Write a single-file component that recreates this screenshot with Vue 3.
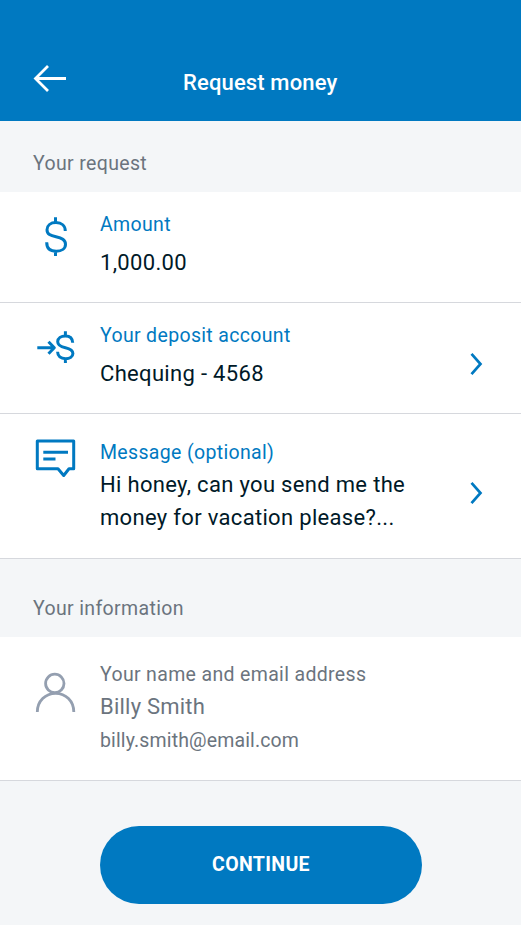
<script setup>
const message = 'Hi honey, can you send me the money for vacation please?...'
</script>

<template>
  <main class="screen">
    <header class="bar">
      <svg class="back" width="34" height="30" viewBox="0 0 34 30" role="img" aria-label="Back">
        <path d="M33 15.5H2.5M15 3L2.5 15.5L15 28" />
      </svg>
      <h1 class="title">Request money</h1>
    </header>

    <h2 class="section first">Your request</h2>

    <section class="row amount">
      <svg class="icon" width="60" height="60" viewBox="0 0 60 60">
        <path class="blue" d="M27.5 12.3v5M27.5 46v5M37.3 26C37.3 20.6 33.5 17.6 28 17.6S19 20.6 19 24.7C19 29.4 22.6 30.7 28 31.8C33.7 33 37.5 34.5 37.5 39.2C37.5 43.6 33.7 46.2 28.2 46.2C22.2 46.2 18.7 43.1 18.7 37.2" />
      </svg>
      <div class="text">
        <div class="label l-amount">Amount</div>
        <div class="value v-amount">1,000.00</div>
      </div>
    </section>

    <section class="row account">
      <svg class="icon" width="60" height="60" viewBox="0 0 60 60">
        <path class="blue" d="M9.3 27.8H26M20.5 21.8L26.3 27.8L20.5 33.8M37.4 11.3v5M37.4 38v5M44.7 22.8C44.5 18.4 41.6 16 37.4 16S29.7 18.3 29.7 21.8C29.7 25.6 33 26.8 37.4 27.7C42 28.7 44.9 30 44.9 33.5C44.9 36.8 41.8 38.7 37.6 38.7C32.7 38.7 29.6 36.2 29.6 31.8" />
      </svg>
      <div class="text">
        <div class="label l-account">Your deposit account</div>
        <div class="value v-account">Chequing - 4568</div>
      </div>
      <svg class="chevron" width="14" height="24" viewBox="0 0 14 24"><path d="M2.5 1.8L11.5 12L2.5 22.2" /></svg>
    </section>

    <section class="row message">
      <svg class="icon" width="60" height="60" viewBox="0 0 60 60">
        <path class="blue" d="M9.3 11H45.7V38.8H41L35.7 45.5L30 38.8H9.3Z M15.3 22.2H40M15.3 29H27.5" />
      </svg>
      <div class="text">
        <div class="label l-message">Message (optional)</div>
        <div class="value v-message">{{ message }}</div>
      </div>
      <svg class="chevron" width="14" height="24" viewBox="0 0 14 24"><path d="M2.5 1.8L11.5 12L2.5 22.2" /></svg>
    </section>

    <h2 class="section second">Your information</h2>

    <section class="row person">
      <svg class="icon" width="60" height="60" viewBox="0 0 60 60">
        <circle class="grey" cx="26.8" cy="23.4" r="9.2" />
        <path class="grey" d="M9.3 52C9.3 41 17.5 33.3 27.6 33.3S45.8 41 45.8 52" />
      </svg>
      <div class="text">
        <div class="label l-person">Your name and email address</div>
        <div class="value v-name">Billy Smith</div>
        <div class="email">billy.smith@email.com</div>
      </div>
    </section>

    <footer class="footer">
      <button class="continue" type="button"><span>CONTINUE</span></button>
    </footer>
  </main>
</template>

<style>
body {
  background: #fff;
}
</style>

<style scoped>
.screen {
  width: 521px;
  height: 925px;
  overflow: hidden;
  background: #f4f6f8;
  font-family: Roboto, sans-serif;
  color: #001928;
}
.bar {
  display: flex;
  align-items: flex-start;
  box-sizing: border-box;
  height: 121px;
  padding: 63px 0 0 33px;
  background: #0079c1;
}
.back path,
.chevron path,
.icon .blue,
.icon .grey {
  fill: none;
}
.back path {
  stroke: #fff;
  stroke-width: 2.8;
}
.title {
  margin: 5px 0 0 116px;
  font-size: 22px;
  line-height: 30px;
  font-weight: 500;
  letter-spacing: 0.14px;
  color: #fff;
  white-space: nowrap;
}
.section {
  box-sizing: border-box;
  margin: 0;
  padding-left: 33px;
  font-size: 19.5px;
  line-height: 26px;
  font-weight: 400;
  letter-spacing: 0.36px;
  color: #6b747e;
}
.first {
  height: 71px;
  padding-top: 30px;
}
.second {
  height: 78px;
  padding-top: 37px;
}
.row {
  display: flex;
  align-items: flex-start;
  box-sizing: border-box;
  padding-left: 28px;
  border-bottom: 1px solid #d6d8dd;
  background: #fff;
}
.amount,
.account {
  height: 111px;
}
.amount {
  padding-top: 13px;
}
.account {
  padding-top: 17px;
}
.message {
  height: 145px;
  padding-top: 16px;
}
.person {
  height: 144px;
  padding-top: 23px;
}
.icon {
  flex: none;
}
.icon .blue {
  stroke: #0079c1;
  stroke-width: 3;
  stroke-linejoin: round;
}
.icon .grey {
  stroke: #949fb0;
  stroke-width: 2.8;
}
.text {
  width: 320px;
  margin-left: 12px;
}
.label {
  font-size: 19.5px;
  line-height: 26px;
  letter-spacing: 0.34px;
  color: #0079c1;
  white-space: nowrap;
}
.value {
  font-size: 22px;
  line-height: 33px;
  letter-spacing: 0.32px;
}
.l-amount {
  margin-top: 7px;
}
.v-amount,
.v-account {
  margin-top: 8px;
}
.l-account {
  margin-top: 3px;
}
.l-message {
  margin-top: 10px;
}
.v-message {
  margin-top: 2px;
}
.l-person {
  margin-top: 2px;
}
.v-name {
  margin-top: 2px;
  letter-spacing: 0.22px;
}
.person .text > div {
  color: #6b747e;
}
.email {
  margin-top: 5px;
  font-size: 19.5px;
  line-height: 26px;
  letter-spacing: 0.14px;
}
.chevron {
  margin-left: 49px;
}
.account .chevron {
  margin-top: 32px;
}
.message .chevron {
  margin-top: 51px;
}
.chevron path {
  stroke: #0079c1;
  stroke-width: 2.7;
}
.footer {
  padding: 45px 0 0 100px;
}
.continue {
  display: flex;
  align-items: center;
  justify-content: center;
  width: 322px;
  height: 78px;
  padding: 0;
  border: 0;
  border-radius: 39px;
  background: #0079c1;
  color: #fff;
  font-family: inherit;
  font-size: 19.5px;
  line-height: 26px;
  font-weight: 700;
  letter-spacing: 0.35px;
}
</style>
